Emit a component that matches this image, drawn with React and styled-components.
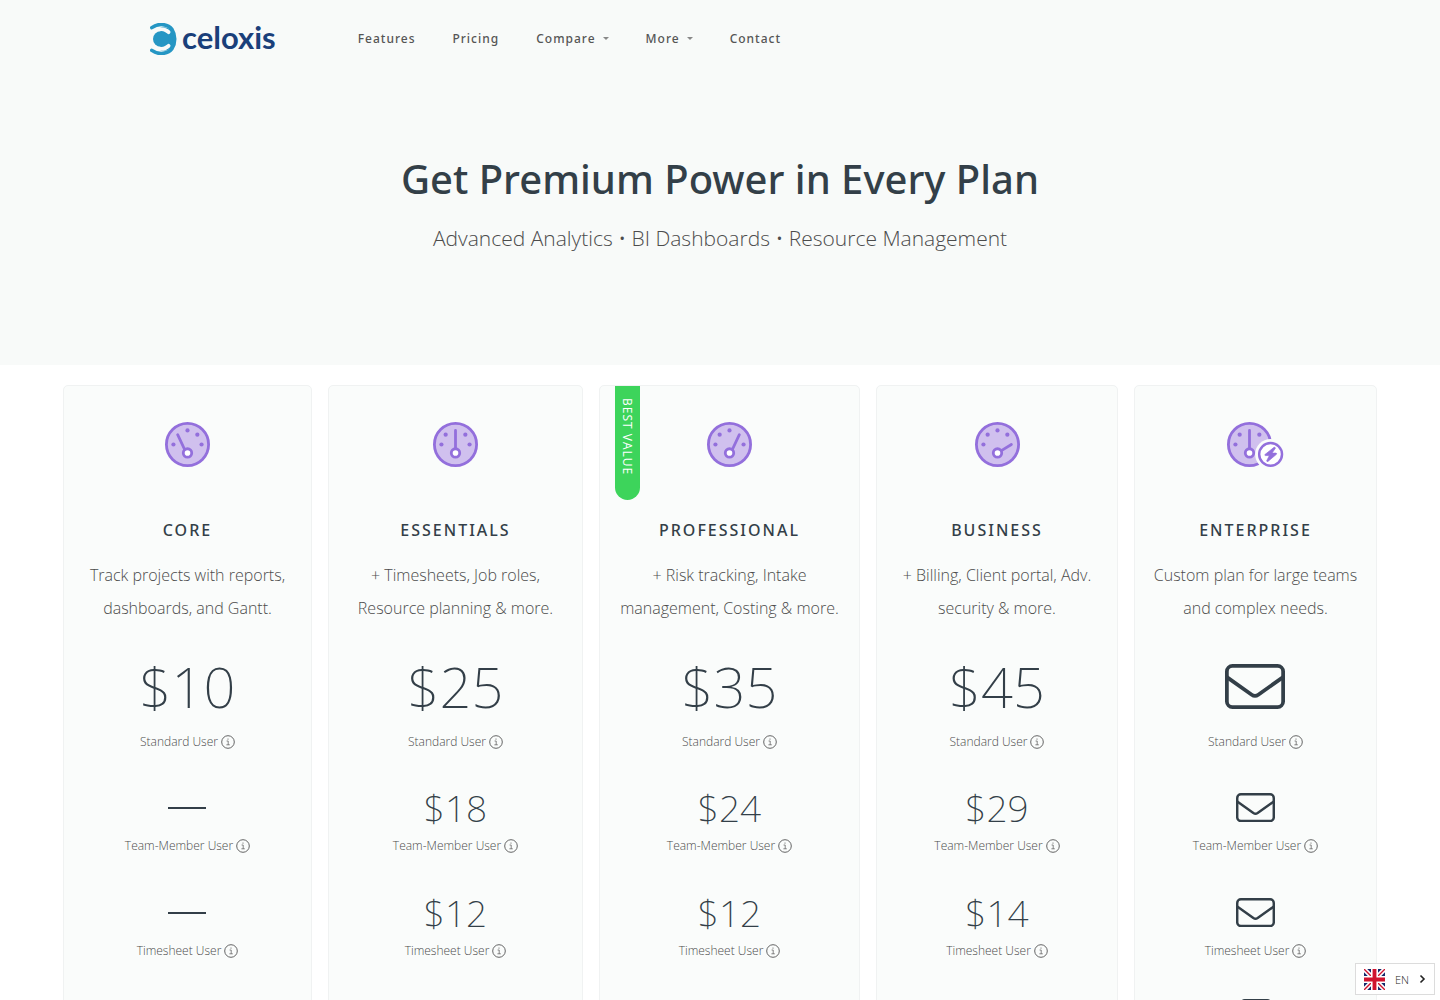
import styled, { createGlobalStyle } from 'styled-components';

const GlobalStyle = createGlobalStyle`
   * {
      box-sizing: border-box;
   }
   body {
      margin: 0;
      background: #ffffff;
      color: #4c4c4c;
      font-family: 'Open Sans', 'Noto Sans', sans-serif;
      font-weight: 300;
   }
   h1, h2, p, ul {
      margin: 0;
      padding: 0;
      list-style: none;
   }
   button {
      font: inherit;
      color: inherit;
      background: none;
      border: 0;
      padding: 0;
      cursor: pointer;
   }
`;

const Hero = styled.header`
   background: #f8faf9;
   padding-bottom: 110px;
`;

const Nav = styled.nav`
   display: flex;
   align-items: center;
   height: 77px;
   max-width: 1140px;
   margin: 0 auto;
   gap: 82px;
`;

const Logo = styled.a`
   display: flex;
   align-items: center;
   gap: 5px;
   color: #1a3f7a;
   text-decoration: none;
   font-family: Lato, sans-serif;
   font-size: 31px;
   font-weight: 700;
   line-height: 28px;
   & svg {
      width: 27px;
      height: 32px;
   }
   & span {
      padding-bottom: 4px;
   }
`;

const Menu = styled.ul`
   display: flex;
   align-items: center;
   gap: 37px;
`;

const MenuLink = styled.a`
   display: flex;
   align-items: center;
   gap: 7px;
   color: #555555;
   text-decoration: none;
   font-family: 'Noto Sans', sans-serif;
   font-size: 12px;
   font-weight: 500;
   letter-spacing: 1px;
   line-height: 20px;
`;

const Caret = styled.span`
   border: 3px solid transparent;
   border-top-color: #888888;
   border-bottom: 0;
`;

const Title = styled.h1`
   margin-top: 74px;
   color: #333f48;
   font-family: 'Noto Sans', sans-serif;
   font-size: 40px;
   font-weight: 500;
   line-height: 56px;
   text-align: center;
`;

const SubTitle = styled.p`
   margin-top: 14px;
   font-size: 21px;
   line-height: 34px;
   text-align: center;
`;

const Plans = styled.main`
   display: grid;
   grid-template-columns: 249fr 255fr 261fr 242fr 243fr;
   gap: 16px;
   padding: 20px 63px;
`;

const Card = styled.section`
   position: relative;
   display: flex;
   flex-direction: column;
   align-items: center;
   padding: 36px 8px 0;
   background: #fafcfb;
   border: 1px solid #f0f2f2;
   border-radius: 5px;
   text-align: center;
`;

const Ribbon = styled.span`
   position: absolute;
   top: 0;
   left: 15px;
   width: 25px;
   height: 114px;
   padding-top: 12px;
   border-radius: 0 0 13px 13px;
   background: #3dd45b;
   color: #ffffff;
   font-size: 12px;
   font-weight: 400;
   letter-spacing: 1px;
   line-height: 25px;
   text-align: left;
   writing-mode: vertical-rl;
`;

const PlanIcon = styled.svg`
   height: 45px;
`;

const PlanName = styled.h2`
   margin-top: 49px;
   color: #333f48;
   font-family: 'Noto Sans', sans-serif;
   font-size: 16px;
   font-weight: 500;
   letter-spacing: 2px;
   line-height: 28px;
   text-transform: uppercase;
`;

const PlanAbout = styled.p`
   margin-top: 15px;
   font-size: 16px;
   line-height: 33px;
`;

const Rate = styled.div`
   display: flex;
   flex-direction: column;
   align-items: center;
   height: ${p => (p.$big ? 149 : 105)}px;
`;

const priceHeights = { big: 92, medium: 57, small: 42 };

const Price = styled.p`
   display: flex;
   align-items: center;
   height: ${p => priceHeights[p.$size]}px;
   margin-top: ${p => (p.$size === 'big' ? 15 : 5)}px;
   color: #333f48;
   font-family: 'Noto Sans', sans-serif;
   font-size: ${p => (p.$size === 'big' ? 56 : 37)}px;
   font-weight: 200;
`;

const mailWidths = { big: 60, medium: 39, small: 30 };

const MailIcon = styled.svg`
   width: ${p => mailWidths[p.$size]}px;
   height: auto;
`;

const Dash = styled.span`
   width: 38px;
   height: 2px;
   background: #333f48;
`;

const UserType = styled.p`
   display: flex;
   align-items: center;
   gap: 3px;
   font-size: 12px;
   line-height: 20px;
   & button {
      display: flex;
   }
`;

const Language = styled.button`
   position: fixed;
   right: 5px;
   bottom: 5px;
   display: flex;
   align-items: center;
   height: 32px;
   && {
      padding: 0 8px;
      background: #ffffff;
      border: 1px solid #dcdcdc;
   }
   & span {
      margin: 0 10px;
      color: #222222;
      font-size: 11px;
   }
`;

const needles = {
   core: [[144, 144], [222, 310]],
   essentials: [[256, 96], [256, 302]],
   professional: [[368, 144], [290, 310]],
   business: [[414, 256], [300, 326]],
   enterprise: [[256, 96], [256, 302]],
};

// the dot that the needle of each plan covers
const needleDots = { core: 1, essentials: 2, professional: 3, business: 4, enterprise: 2 };

const dots = [
   [96, 256],
   [144, 144],
   [256, 96],
   [368, 144],
   [416, 256],
];

const plans = [
   { id: 'core', about: ['Track projects with reports,', 'dashboards, and Gantt.'], rates: ['$10', null, null] },
   { id: 'essentials', about: ['+ Timesheets, Job roles,', 'Resource planning & more.'], rates: ['$25', '$18', '$12'] },
   { id: 'professional', about: ['+ Risk tracking, Intake', 'management, Costing & more.'], rates: ['$35', '$24', '$12'], best: true },
   { id: 'business', about: ['+ Billing, Client portal, Adv.', 'security & more.'], rates: ['$45', '$29', '$14'] },
   { id: 'enterprise', about: ['Custom plan for large teams', 'and complex needs.'], rates: ['mail', 'mail', 'mail', 'mail'] },
];

const userTypes = ['Standard User', 'Team-Member User', 'Timesheet User'];
const sizes = ['big', 'medium', 'medium', 'small'];

const menu = [
   { label: 'Features' },
   { label: 'Pricing' },
   { label: 'Compare', sub: true },
   { label: 'More', sub: true },
   { label: 'Contact' },
];

const Gauge = ({ id }) => {
   const [from, to] = needles[id];
   const wide = id === 'enterprise';
   return (
      <PlanIcon viewBox={`0 0 ${wide ? 640 : 512} 512`} aria-hidden="true">
         <circle cx="256" cy="256" r="240" fill="#d0c0ee" stroke="#936fdc" strokeWidth="32" />
         {dots.map(([x, y], i) =>
            i === needleDots[id] || (wide && i === 4) ? null : <circle key={i} cx={x} cy={y} r="24" fill="#936fdc" />
         )}
         <path d={`M${from} L${to}`} stroke="#936fdc" strokeWidth="32" strokeLinecap="round" />
         <circle cx="256" cy="352" r="48" fill="#ffffff" stroke="#936fdc" strokeWidth="32" />
         {wide && (
            <>
               <circle cx="496" cy="368" r="176" fill="#fafcfb" />
               <circle cx="496" cy="368" r="130" fill="#ffffff" stroke="#936fdc" strokeWidth="28" />
               <path
                  d="M536 288 L432 370 q-6 10 6 12 H482 L452 440 q0 14 14 8 L562 368 q8 -12 -6 -14 H512 L550 300 q0 -16 -14 -12 Z"
                  fill="#936fdc"
                  stroke="#936fdc"
                  strokeWidth="8"
               />
            </>
         )}
      </PlanIcon>
   );
};

const Mail = ({ size }) => (
   <MailIcon $size={size} viewBox="0 0 512 384" fill="none" stroke="#333f48" strokeWidth="32" role="img" aria-label="Contact us">
      <rect x="16" y="16" width="480" height="352" rx="48" />
      <path d="M16 112 L228 262 a48 48 0 0 0 56 0 L496 112" />
   </MailIcon>
);

const Info = () => (
   <svg width="14" height="14" viewBox="0 0 14 14" fill="none" stroke="#545454" aria-hidden="true">
      <circle cx="7" cy="7" r="6.3" strokeWidth="0.9" />
      <path d="M5.6 6 H7.2 V9.8 M5.4 9.8 H8.8" strokeWidth="0.7" />
      <circle cx="7" cy="4" r="0.6" fill="#545454" stroke="none" />
   </svg>
);

const LogoMark = () => (
   <svg viewBox="0 0 27 32" fill="none" aria-hidden="true">
      <path d="M10.6 4 C16 4 20 5 22 8 C25 12 25 20 22 24 C20 27 16 28 10.6 28 Z" fill="#2596c4" />
      <path d="M3 8.6 C7.5 5.4 14.5 5 18.6 9.2 M3 23.4 C7.5 26.6 14.5 27 18.6 22.8" stroke="#f8faf9" strokeWidth="3.8" strokeLinecap="round" />
      <path
         d="M1.8 4.6 C9 -0.5 18 1.2 22 6.4 C25.6 12 25.6 20 22 25.6 C18 30.8 9 32.5 1.8 27.4"
         stroke="#2596c4"
         strokeWidth="3.6"
         strokeLinecap="round"
      />
      <circle cx="10.8" cy="16" r="7.8" fill="#2596c4" />
   </svg>
);

const Flag = () => (
   <svg width="21" height="21" viewBox="0 0 60 60" aria-hidden="true">
      <path fill="#14296b" d="M0 0h60v60H0z" />
      <path d="M0 0 L60 60 M60 0 L0 60" stroke="#ffffff" strokeWidth="13" />
      <path d="M0 0 L60 60 M60 0 L0 60" stroke="#d0142f" strokeWidth="4" />
      <path d="M30 0 V60 M0 30 H60" stroke="#ffffff" strokeWidth="20" />
      <path d="M30 0 V60 M0 30 H60" stroke="#d0142f" strokeWidth="11" />
   </svg>
);

const PriceValue = ({ rate, size }) => {
   if (rate === 'mail') return <Mail size={size} />;
   return rate || <Dash />;
};

const PlanCard = ({ plan }) => {
   return (
      <Card>
         {plan.best && <Ribbon>BEST VALUE</Ribbon>}
         <Gauge id={plan.id} />
         <PlanName>{plan.id}</PlanName>
         <PlanAbout>
            {plan.about[0]}
            <br />
            {plan.about[1]}
         </PlanAbout>
         {plan.rates.map((rate, i) => (
            <Rate key={i} $big={i === 0}>
               <Price $size={sizes[i]}>
                  <PriceValue rate={rate} size={sizes[i]} />
               </Price>
               {userTypes[i] && (
                  <UserType>
                     {userTypes[i]}
                     <button type="button" aria-label={`About ${userTypes[i]}`}>
                        <Info />
                     </button>
                  </UserType>
               )}
            </Rate>
         ))}
      </Card>
   );
};

const App = () => {
   return (
      <>
         <GlobalStyle />
         <Hero>
            <Nav>
               <Logo href="#">
                  <LogoMark />
                  <span>celoxis</span>
               </Logo>
               <Menu>
                  {menu.map(el => (
                     <li key={el.label}>
                        <MenuLink href="#">
                           {el.label}
                           {el.sub && <Caret />}
                        </MenuLink>
                     </li>
                  ))}
               </Menu>
            </Nav>
            <Title>Get Premium Power in Every Plan</Title>
            <SubTitle>Advanced Analytics • BI Dashboards • Resource Management</SubTitle>
         </Hero>
         <Plans>
            {plans.map(plan => (
               <PlanCard key={plan.id} plan={plan} />
            ))}
         </Plans>
         <Language type="button">
            <Flag />
            <span>EN</span>
            <svg width="7" height="10" viewBox="0 0 7 10" fill="none" stroke="#222222" strokeWidth="1.6" aria-hidden="true">
               <path d="M1.5 1.5 L5 5 L1.5 8.5" />
            </svg>
         </Language>
      </>
   );
};

export default App;
